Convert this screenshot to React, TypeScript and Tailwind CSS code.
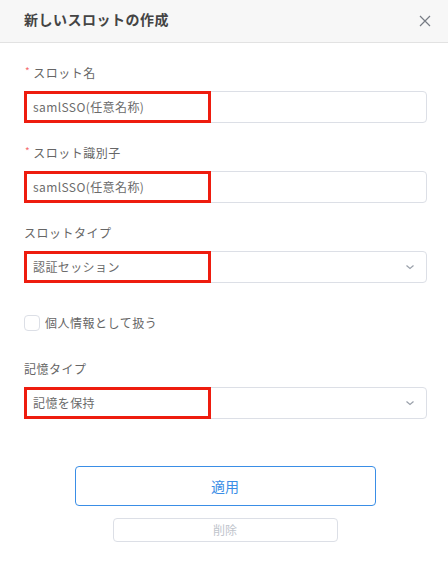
import React from "react";

const font = { fontFamily: '"Noto Sans CJK JP", "Noto Sans", sans-serif' };

/* ================== PIECES ================== */
const Label: React.FC<{ text: string; required?: boolean }> = ({ text, required }) => (
  <div className="flex items-center h-4 text-xs leading-4 text-[#666] tracking-[0.5px]">
    {required && <span className="text-[#f56c6c] mr-[3px] ml-[1px] text-[10px] -mt-1">*</span>}
    <span>{text}</span>
  </div>
);

const Marked: React.FC<{ value: string; select?: boolean }> = ({ value, select }) => (
  <div className="relative mt-[10px] h-8 rounded border border-[#dcdfe6] bg-white flex items-center px-2">
    <span className="text-xs text-[#6b6b6b] tracking-[0.4px]">{value}</span>
    {select && (
      <svg className="ml-auto mr-[3px]" width="10" height="6" viewBox="0 0 10 6" fill="none">
        <path d="M1.5 1.5 L5 4.5 L8.5 1.5" stroke="#9aa0aa" strokeWidth="1.2" />
      </svg>
    )}
    {/* red highlight box */}
    <div className="absolute -left-px -top-px -bottom-px w-[187px] border-[3px] border-[#ee1c0e]" />
  </div>
);

/* ================== COMPONENT ================== */
const App: React.FC = () => {
  return (
    <div className="w-[448px] h-[567px] bg-white" style={font}>
      {/* Header */}
      <div className="h-[43px] bg-[#f7f7f7] border-b border-[#e2e2e2] flex items-center justify-between pl-6 pr-4">
        <h2 className="text-sm font-bold text-[#444] tracking-[0.5px] -mt-[4px]">新しいスロットの作成</h2>
        <svg width="12" height="12" viewBox="0 0 12 12" className="mr-[1px] -mt-[1px]">
          <path d="M1 1 L11 11 M11 1 L1 11" stroke="#777c85" strokeWidth="1.2" />
        </svg>
      </div>

      <div className="pl-6 pr-[21px] pt-[22px]">
        <Label text="スロット名" required />
        <Marked value="samlSSO(任意名称)" />

        <div className="mt-[22px]">
          <Label text="スロット識別子" required />
          <Marked value="samlSSO(任意名称)" />
        </div>

        <div className="mt-[22px]">
          <Label text="スロットタイプ" />
          <Marked value="認証セッション" select />
        </div>

        <div className="mt-8 flex items-center h-4">
          <div className="w-4 h-4 border border-[#dcdfe6] rounded-sm bg-white" />
          <span className="ml-[5px] text-xs text-[#666] tracking-[0.5px]">個人情報として扱う</span>
        </div>

        <div className="mt-[30px]">
          <Label text="記憶タイプ" />
          <Marked value="記憶を保持" select />
        </div>

        {/* Buttons */}
        <div className="flex flex-col items-center mt-[47px]">
          <button className="w-[301px] h-10 -ml-[1px] rounded border border-[#3a8ee6] text-[#3a8ee6] text-sm bg-white">
            適用
          </button>
          <button className="mt-3 w-[225px] h-6 -ml-[1px] rounded border border-[#dcdfe6] text-[#c0c4cc] text-xs bg-white">
            削除
          </button>
        </div>
      </div>
    </div>
  );
};

export default App;
